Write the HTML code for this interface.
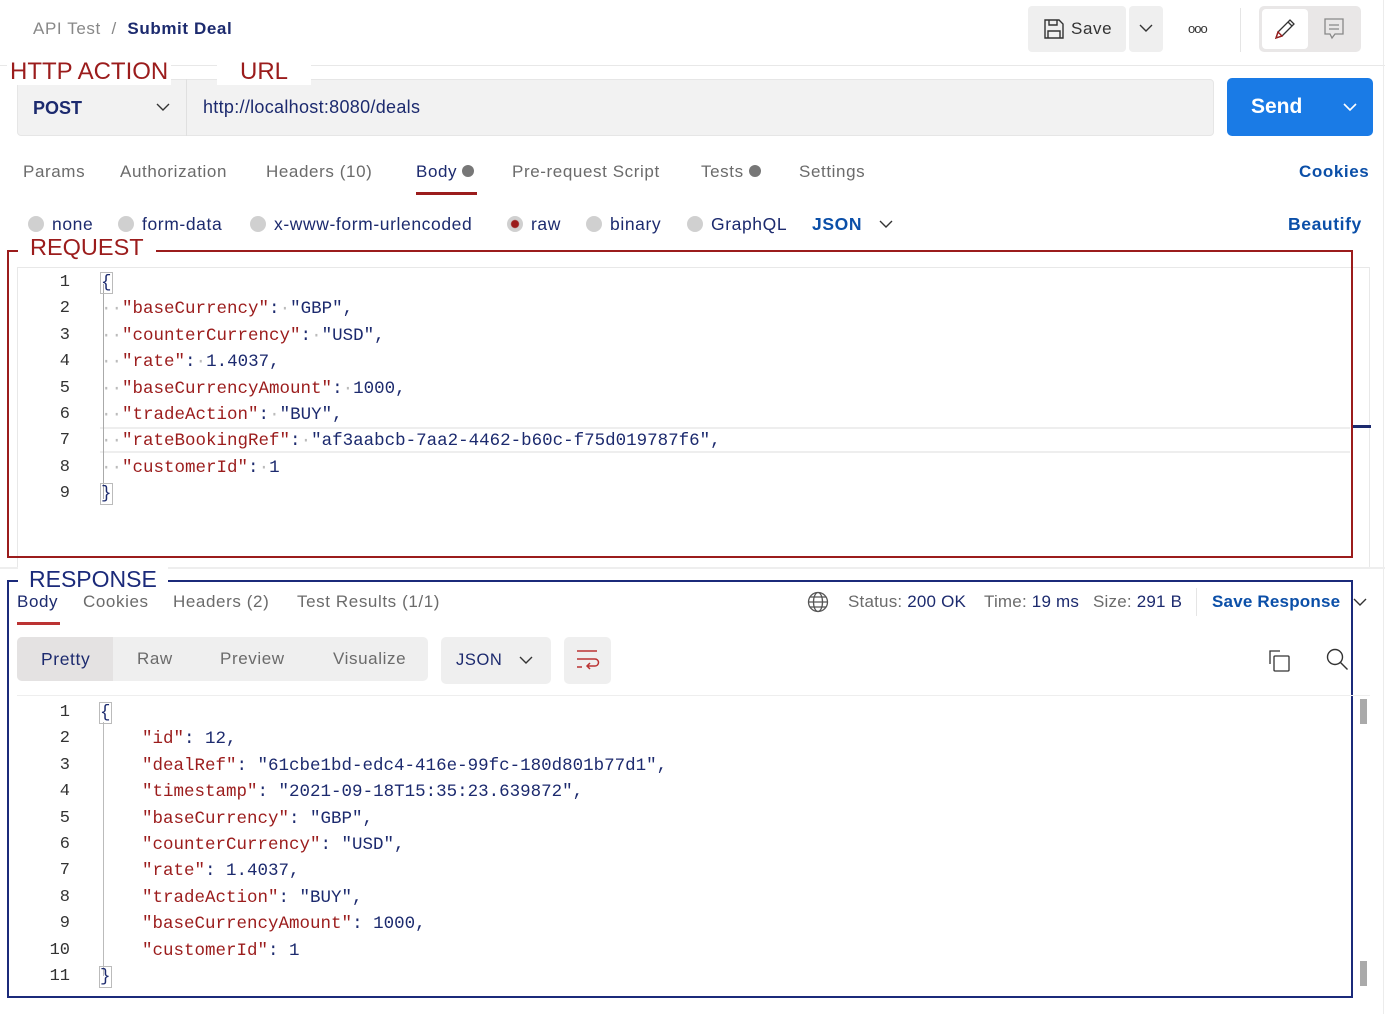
<!DOCTYPE html>
<html><head><meta charset="utf-8"><style>
*{margin:0;padding:0;box-sizing:border-box}
body{width:1400px;height:1014px;background:#fff;position:relative;overflow:hidden;font-family:"Liberation Sans",sans-serif;color:#212121}
.a{position:absolute;white-space:nowrap}
.t{font-size:17px;color:#6b6b6b;letter-spacing:0.6px}
.sp{letter-spacing:0.6px}
.lab{font-size:24px;line-height:26px;background:#fff;padding:0 3px}
.code{font-family:"Liberation Mono",monospace;font-size:17.5px;color:#1c2a6e}
.k{color:#9b1c1c}
.ln{font-family:"Liberation Mono",monospace;font-size:17px;color:#333;text-align:right;width:40px}
.rad{display:inline-block;width:16px;height:16px;border-radius:50%;background:#d0d0d0;vertical-align:-2px;margin-right:8px}
.d{color:#bbb}
</style></head><body>
<div class="a sp" style="left:33px;top:19px;font-size:17px;color:#888">API Test &nbsp;/&nbsp; <span style="color:#1c2a6e;font-weight:bold">Submit Deal</span></div>
<div class="a" style="left:1028px;top:6px;width:98px;height:46px;background:#efefef;border-radius:4px"></div>
<svg class="a" style="left:1043px;top:18px" width="22" height="22" viewBox="0 0 22 22" fill="none" stroke="#333" stroke-width="1.4"><path d="M2 2h14l4 4v14H2z M6 2v5h8V2 M5 20v-7h12v7"/></svg>
<div class="a sp" style="left:1071px;top:19px;font-size:17px;color:#333">Save</div>
<div class="a" style="left:1129px;top:6px;width:34px;height:46px;background:#efefef;border-radius:4px"></div>
<svg class="a" style="left:1139px;top:24px" width="14" height="9"><path d="M1 1l6 6 6-6" stroke="#333" fill="none" stroke-width="1.4"/></svg>
<div class="a" style="left:1188px;top:21px;font-size:13px;color:#333;letter-spacing:-1px">ooo</div>
<div class="a" style="left:1240px;top:8px;width:1px;height:44px;background:#e5e5e5"></div>
<div class="a" style="left:1259px;top:6px;width:102px;height:46px;background:#e9e7e7;border-radius:5px"></div>
<div class="a" style="left:1262px;top:9px;width:46px;height:40px;background:#fff;border-radius:4px"></div>
<svg class="a" style="left:1273px;top:17px" width="24" height="24" fill="none" stroke="#333" stroke-width="1.3"><path d="M3 21l2-6L17 3l4 4L9 19z M15 5l4 4"/><path d="M3 21l2-6 4 4z" stroke="#9b1c1c"/></svg>
<svg class="a" style="left:1324px;top:18px" width="20" height="22" fill="none" stroke="#888" stroke-width="1.3"><path d="M1 1h18v15H11l-3 4-2-4H1z M5 7h10 M5 11h10"/></svg>
<div class="a" style="left:0;top:65px;width:1385px;height:1px;background:#e8e8e8"></div>
<div class="a" style="left:1383px;top:0;width:1px;height:1014px;background:#ececec"></div>

<div class="a" style="left:17px;top:79px;width:1197px;height:57px;background:#f2f2f2;border:1px solid #e6e6e6;border-radius:4px"></div>
<div class="a" style="left:186px;top:79px;width:1px;height:57px;background:#e0e0e0"></div>
<div class="a" style="left:33px;top:98px;font-size:18px;font-weight:bold;color:#1c2a6e">POST</div>
<svg class="a" style="left:156px;top:103px" width="14" height="9"><path d="M1 1l6 6 6-6" stroke="#333" fill="none" stroke-width="1.4"/></svg>
<div class="a sp" style="left:203px;top:97px;font-size:18px;color:#1c2a6e;letter-spacing:0.3px">http://localhost:8080/deals</div>
<div class="a lab" style="left:7px;top:59px;color:#9b1c1c">HTTP ACTION</div>
<div class="a lab" style="left:217px;top:59px;color:#9b1c1c;padding:0 23px">URL</div>
<div class="a" style="left:1227px;top:78px;width:146px;height:58px;background:#1a7be6;border-radius:5px"></div>
<div class="a" style="left:1251px;top:95px;font-size:21px;color:#fff;font-weight:bold">Send</div>
<svg class="a" style="left:1343px;top:103px" width="14" height="9"><path d="M1 1l6 6 6-6" stroke="#fff" fill="none" stroke-width="1.6"/></svg>

<div class="a t" style="left:23px;top:162px">Params</div>
<div class="a t" style="left:120px;top:162px">Authorization</div>
<div class="a t" style="left:266px;top:162px">Headers (10)</div>
<div class="a t" style="left:416px;top:162px;color:#1c2a6e">Body <span style="display:inline-block;width:12px;height:12px;border-radius:50%;background:#777;vertical-align:0"></span></div>
<div class="a" style="left:416px;top:192px;width:61px;height:3px;background:#9b1c1c"></div>
<div class="a t" style="left:512px;top:162px">Pre-request Script</div>
<div class="a t" style="left:701px;top:162px">Tests <span style="display:inline-block;width:12px;height:12px;border-radius:50%;background:#777;vertical-align:0"></span></div>
<div class="a t" style="left:799px;top:162px">Settings</div>
<div class="a sp" style="left:1299px;top:162px;font-size:17px;font-weight:bold;color:#0b4fa8">Cookies</div>

<div class="a sp" style="left:28px;top:214px;font-size:17.5px;color:#1c2a6e"><span class="rad"></span>none</div>
<div class="a sp" style="left:118px;top:214px;font-size:17.5px;color:#1c2a6e"><span class="rad"></span>form-data</div>
<div class="a sp" style="left:250px;top:214px;font-size:17.5px;color:#1c2a6e"><span class="rad"></span>x-www-form-urlencoded</div>
<div class="a sp" style="left:507px;top:214px;font-size:17.5px;color:#1c2a6e"><span class="rad" style="background:radial-gradient(circle,#9b1c1c 0 3.5px,#d0d0d0 4.5px)"></span>raw</div>
<div class="a sp" style="left:586px;top:214px;font-size:17.5px;color:#1c2a6e"><span class="rad"></span>binary</div>
<div class="a sp" style="left:687px;top:214px;font-size:17.5px;color:#1c2a6e"><span class="rad"></span>GraphQL</div>
<div class="a sp" style="left:812px;top:214px;font-size:17.5px;color:#0b4fa8;font-weight:bold">JSON</div>
<svg class="a" style="left:879px;top:220px" width="14" height="9"><path d="M1 1l6 6 6-6" stroke="#333" fill="none" stroke-width="1.4"/></svg>
<div class="a sp" style="left:1288px;top:214px;font-size:17.5px;color:#0b4fa8;font-weight:bold">Beautify</div>

<div class="a" style="left:17px;top:267px;width:1353px;height:300px;border:1px solid #e8e8e8;border-bottom:none"></div>
<div class="a" style="left:100px;top:427px;width:1250px;height:26px;border-top:2px solid #eee;border-bottom:2px solid #eee"></div>
<div class="a" style="left:1353px;top:425px;width:18px;height:3px;background:#1c2a6e"></div>
<div class="a" style="left:103px;top:284px;width:1px;height:215px;background:#aaa"></div>
<div class="a" style="left:7px;top:250px;width:1346px;height:308px;border:2px solid #9b1c1c"></div>
<div class="a lab" style="left:18px;top:234px;color:#9b1c1c;padding:0 12px;font-size:23.5px">REQUEST</div>
<div class="a" style="left:30px;top:270px;line-height:26.4px">
<div class="ln">1<br>2<br>3<br>4<br>5<br>6<br>7<br>8<br>9</div></div>
<div class="a code" style="left:101px;top:270px;line-height:26.4px;white-space:pre"><span style="outline:1px solid #bbb">{</span>
<span class="d">··</span><span class="k">"baseCurrency"</span>:<span class="d">·</span>"GBP",
<span class="d">··</span><span class="k">"counterCurrency"</span>:<span class="d">·</span>"USD",
<span class="d">··</span><span class="k">"rate"</span>:<span class="d">·</span>1.4037,
<span class="d">··</span><span class="k">"baseCurrencyAmount"</span>:<span class="d">·</span>1000,
<span class="d">··</span><span class="k">"tradeAction"</span>:<span class="d">·</span>"BUY",
<span class="d">··</span><span class="k">"rateBookingRef"</span>:<span class="d">·</span>"af3aabcb-7aa2-4462-b60c-f75d019787f6",
<span class="d">··</span><span class="k">"customerId"</span>:<span class="d">·</span>1
<span style="outline:1px solid #bbb">}</span></div>

<div class="a" style="left:0;top:567px;width:1385px;height:2px;background:#eee"></div>
<div class="a" style="left:7px;top:580px;width:1346px;height:418px;border:2px solid #1b2a7a"></div>
<div class="a lab" style="left:18px;top:566px;color:#1b2a7a;padding:0 11px;font-size:23px">RESPONSE</div>
<div class="a t" style="left:17px;top:592px;color:#1c2a6e">Body</div>
<div class="a" style="left:17px;top:622px;width:43px;height:3px;background:#b33"></div>
<div class="a t" style="left:83px;top:592px">Cookies</div>
<div class="a t" style="left:173px;top:592px">Headers (2)</div>
<div class="a t" style="left:297px;top:592px">Test Results (1/1)</div>
<svg class="a" style="left:807px;top:591px" width="22" height="22" fill="none" stroke="#555" stroke-width="1.3"><circle cx="11" cy="11" r="9.5"/><ellipse cx="11" cy="11" rx="4.5" ry="9.5"/><path d="M1.5 11h19 M3 6h16 M3 16h16"/></svg>
<div class="a t" style="left:848px;top:592px;letter-spacing:0.2px">Status: <span style="color:#1c2a6e">200 OK</span></div>
<div class="a t" style="left:984px;top:592px;letter-spacing:0.2px">Time: <span style="color:#1c2a6e">19 ms</span></div>
<div class="a t" style="left:1093px;top:592px;letter-spacing:0.2px">Size: <span style="color:#1c2a6e">291 B</span></div>
<div class="a" style="left:1196px;top:588px;width:1px;height:28px;background:#e5e5e5"></div>
<div class="a" style="left:1212px;top:592px;font-size:17px;font-weight:bold;color:#0b4fa8;letter-spacing:0.2px">Save Response</div>
<svg class="a" style="left:1353px;top:598px" width="14" height="9"><path d="M1 1l6 6 6-6" stroke="#333" fill="none" stroke-width="1.4"/></svg>

<div class="a" style="left:17px;top:637px;width:411px;height:44px;background:#efefef;border-radius:5px"></div>
<div class="a" style="left:17px;top:637px;width:96px;height:44px;background:#e4e2e2;border-radius:5px 0 0 5px"></div>
<div class="a sp" style="left:41px;top:649px;font-size:17.5px;color:#1c2a6e">Pretty</div>
<div class="a t" style="left:137px;top:649px">Raw</div>
<div class="a t" style="left:220px;top:649px">Preview</div>
<div class="a t" style="left:333px;top:649px">Visualize</div>
<div class="a" style="left:441px;top:637px;width:110px;height:47px;background:#efefef;border-radius:5px"></div>
<div class="a sp" style="left:456px;top:651px;font-size:16.5px;color:#1c2a6e">JSON</div>
<svg class="a" style="left:519px;top:656px" width="14" height="9"><path d="M1 1l6 6 6-6" stroke="#333" fill="none" stroke-width="1.4"/></svg>
<div class="a" style="left:564px;top:637px;width:47px;height:47px;background:#efefef;border-radius:5px"></div>
<svg class="a" style="left:576px;top:649px" width="24" height="22" fill="none" stroke="#b33" stroke-width="1.5"><path d="M1 2h20 M1 10h18a3 3 0 0 1 0 7h-8 M14 14l-3 3 3 3 M1 18h5"/></svg>
<svg class="a" style="left:1268px;top:649px" width="24" height="24" fill="none" stroke="#333" stroke-width="1.3"><path d="M2 15V2h10"/><rect x="6" y="7" width="15" height="15" rx="1"/></svg>
<svg class="a" style="left:1326px;top:648px" width="24" height="24" fill="none" stroke="#333" stroke-width="1.4"><circle cx="9" cy="9" r="7.5"/><path d="M14.5 14.5l7 7"/></svg>
<div class="a" style="left:1360px;top:699px;width:7px;height:25px;background:#aaa"></div>
<div class="a" style="left:1360px;top:961px;width:7px;height:25px;background:#aaa"></div>
<div class="a" style="left:17px;top:695px;width:1353px;height:1px;background:#eee"></div>
<div class="a" style="left:103px;top:722px;width:1px;height:254px;background:#bbb"></div>

<div class="a" style="left:30px;top:700px;line-height:26.4px">
<div class="ln">1<br>2<br>3<br>4<br>5<br>6<br>7<br>8<br>9<br>10<br>11</div></div>
<div class="a code" style="left:100px;top:700px;line-height:26.4px;white-space:pre"><span style="outline:1px solid #bbb">{</span>
    <span class="k">"id"</span>: 12,
    <span class="k">"dealRef"</span>: "61cbe1bd-edc4-416e-99fc-180d801b77d1",
    <span class="k">"timestamp"</span>: "2021-09-18T15:35:23.639872",
    <span class="k">"baseCurrency"</span>: "GBP",
    <span class="k">"counterCurrency"</span>: "USD",
    <span class="k">"rate"</span>: 1.4037,
    <span class="k">"tradeAction"</span>: "BUY",
    <span class="k">"baseCurrencyAmount"</span>: 1000,
    <span class="k">"customerId"</span>: 1
<span style="outline:1px solid #bbb">}</span></div>
</body></html>
